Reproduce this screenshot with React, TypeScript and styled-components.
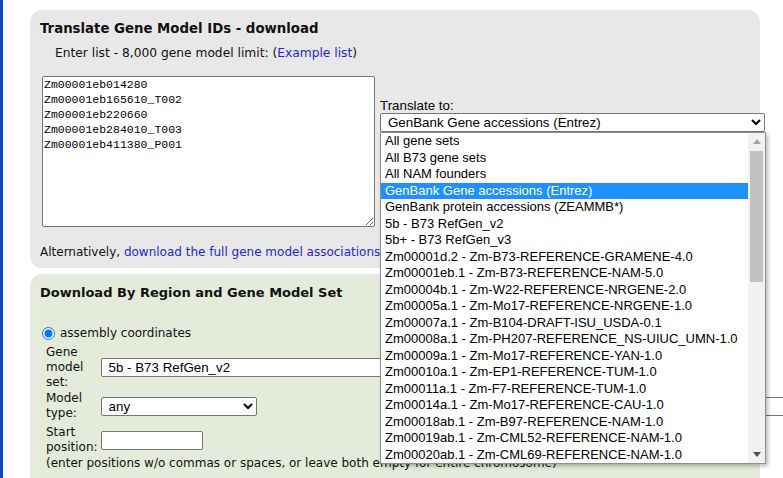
import React from "react";
import styled, { createGlobalStyle } from "styled-components";

const GlobalStyle = createGlobalStyle`
  html, body { margin: 0; padding: 0; overflow: hidden; background: #ffffff; }
  body {
    font-family: "DejaVu Sans", Verdana, sans-serif;
    font-size: 12px;
    color: #111111;
  }
  * { box-sizing: border-box; }
`;

const Page = styled.div`
  width: 783px;
  height: 478px;
  border-left: 3px solid #0b4ab5;
  padding: 10px 0 0 27px;
  overflow: hidden;
`;

const Panel = styled.section`
  width: 730px;
  background: #e8e8e8;
  border-radius: 12px;
  padding: 11px 10px 9px;
`;

const GreenPanel = styled.section`
  width: 730px;
  margin-top: 6px;
  background: #e5ebdb;
  border: 3px solid #e8e8e8;
  border-radius: 12px;
  padding: 8px 7px 0;
  min-height: 260px;
`;

const Title = styled.h2<{ $size?: number }>`
  margin: 0;
  font-size: ${(p) => p.$size ?? 13}px;
  font-weight: bold;
  line-height: 15px;
`;

const Intro = styled.p`
  margin: 10px 0 0;
  padding-left: 15px;
  font-size: 12.25px;
  line-height: 14px;
`;

const Link = styled.a`
  color: #2626d9;
  text-decoration: none;
`;

const EntryRow = styled.div`
  display: flex;
  align-items: flex-start;
  margin-top: 16px;
  padding-left: 2px;
`;

const IdBox = styled.textarea`
  flex: none;
  width: 333px;
  height: 151px;
  margin: 0;
  padding: 0 1px;
  font-family: "Liberation Mono", "DejaVu Sans Mono", monospace;
  font-size: 11.5px;
  line-height: 15px;
  color: #000;
  border: 1px solid #767676;
  border-radius: 2px;
  background: #fff;
  overflow: hidden;
`;

const TranslateCol = styled.div`
  flex: none;
  position: relative;
  margin: 22px 0 0 5px;
  width: 385px;
`;

const FieldLabel = styled.div`
  font-family: "Liberation Sans", Arial, sans-serif;
  font-size: 13.33px;
  line-height: 15.3px;
  color: #000;
`;

const NativeSelect = styled.select<{ $w: number }>`
  display: block;
  flex: none;
  width: ${(p) => p.$w}px;
  height: 19px;
  margin: 0;
  padding: 0 0 0 3px;
  font-family: "Liberation Sans", Arial, sans-serif;
  font-size: 13.33px;
  color: #000;
  background: #fff;
  border: 1px solid #767676;
  border-radius: 2px;
`;

const Popup = styled.div`
  position: absolute;
  top: 100%;
  left: 0;
  width: 386px;
  height: 332px;
  display: flex;
  background: #fff;
  border: 1px solid #8f8f8f;
  box-shadow: 2px 2px 4px rgba(0, 0, 0, 0.28);
  z-index: 10;
  font-family: "Liberation Sans", Arial, sans-serif;
  font-size: 13px;
  color: #000;
`;

const OptionList = styled.ul`
  flex: 1;
  margin: 0;
  padding: 0;
  list-style: none;
  overflow: hidden;
`;

const OptionItem = styled.li<{ $selected?: boolean }>`
  height: 16.5px;
  line-height: 16.5px;
  padding: 0 4px;
  white-space: nowrap;
  background: ${(p) => (p.$selected ? "#1e90ff" : "transparent")};
  color: ${(p) => (p.$selected ? "#ffffff" : "#000000")};
`;

const ScrollTrack = styled.div`
  width: 17px;
  display: flex;
  flex-direction: column;
  align-items: center;
  background: #f1f1f1;
`;

const ScrollArrow = styled.div`
  height: 17px;
  width: 100%;
  display: flex;
  align-items: center;
  justify-content: center;
`;

const ScrollThumb = styled.div`
  width: 13px;
  height: 131px;
  margin-top: 1px;
  background: #c1c1c1;
`;

const ScrollSpacer = styled.div`
  flex: 1;
`;

const AltLine = styled.p`
  margin: 18px 0 0;
  line-height: 14px;
  white-space: nowrap;
`;

const RadioRow = styled.label`
  display: flex;
  align-items: center;
  margin-top: 26px;
  line-height: 14px;
`;

const Radio = styled.input`
  width: 13px;
  height: 13px;
  margin: 0 5px 0 2px;
  accent-color: #0075ff;
`;

const FormGrid = styled.div`
  display: grid;
  grid-template-columns: min-content auto;
  column-gap: 3px;
  row-gap: 1px;
  margin-top: 5px;
  padding-left: 6px;
`;

const RowLabel = styled.div<{ $extra?: number }>`
  line-height: 15px;
  margin-top: ${(p) => p.$extra ?? 0}px;
`;

const RowControl = styled.div<{ $extra?: number }>`
  display: flex;
  align-items: center;
  margin-top: ${(p) => p.$extra ?? 0}px;
`;

const TextInput = styled.input<{ $w: number; $ml?: number }>`
  width: ${(p) => p.$w}px;
  height: 19px;
  margin: 0 0 0 ${(p) => p.$ml ?? 0}px;
  padding: 0 2px;
  font-family: "Liberation Sans", Arial, sans-serif;
  font-size: 13.33px;
  border: 1px solid #767676;
  border-radius: 2px;
  background: #fff;
  flex: none;
`;

const Note = styled.p`
  margin: 1px 0 0;
  padding-left: 6px;
  line-height: 15px;
  white-space: nowrap;
`;

const OPTIONS = [
  "All gene sets",
  "All B73 gene sets",
  "All NAM founders",
  "GenBank Gene accessions (Entrez)",
  "GenBank protein accessions (ZEAMMB*)",
  "5b - B73 RefGen_v2",
  "5b+ - B73 RefGen_v3",
  "Zm00001d.2 - Zm-B73-REFERENCE-GRAMENE-4.0",
  "Zm00001eb.1 - Zm-B73-REFERENCE-NAM-5.0",
  "Zm00004b.1 - Zm-W22-REFERENCE-NRGENE-2.0",
  "Zm00005a.1 - Zm-Mo17-REFERENCE-NRGENE-1.0",
  "Zm00007a.1 - Zm-B104-DRAFT-ISU_USDA-0.1",
  "Zm00008a.1 - Zm-PH207-REFERENCE_NS-UIUC_UMN-1.0",
  "Zm00009a.1 - Zm-Mo17-REFERENCE-YAN-1.0",
  "Zm00010a.1 - Zm-EP1-REFERENCE-TUM-1.0",
  "Zm00011a.1 - Zm-F7-REFERENCE-TUM-1.0",
  "Zm00014a.1 - Zm-Mo17-REFERENCE-CAU-1.0",
  "Zm00018ab.1 - Zm-B97-REFERENCE-NAM-1.0",
  "Zm00019ab.1 - Zm-CML52-REFERENCE-NAM-1.0",
  "Zm00020ab.1 - Zm-CML69-REFERENCE-NAM-1.0",
];

const SELECTED = "GenBank Gene accessions (Entrez)";

const IDS = [
  "Zm00001eb014280",
  "Zm00001eb165610_T002",
  "Zm00001eb220660",
  "Zm00001eb284010_T003",
  "Zm00001eb411380_P001",
].join("\n");

const Triangle = ({ up, color }: { up?: boolean; color: string }) => (
  <svg width="8" height="5" viewBox="0 0 8 5">
    <polygon points={up ? "0,5 8,5 4,0" : "0,0 8,0 4,5"} fill={color} />
  </svg>
);

export default function App() {
  return (
    <>
      <GlobalStyle />
      <Page>
        <Panel>
          <Title $size={13.3}>Translate Gene Model IDs - download</Title>
          <Intro>
            Enter list - 8,000 gene model limit: (<Link href="#">Example list</Link>)
          </Intro>
          <EntryRow>
            <IdBox defaultValue={IDS} spellCheck={false} />
            <TranslateCol>
              <FieldLabel>Translate to:</FieldLabel>
              <NativeSelect $w={385} defaultValue={SELECTED}>
                {OPTIONS.map((o) => (
                  <option key={o} value={o}>
                    {o}
                  </option>
                ))}
              </NativeSelect>
              <Popup>
                <OptionList>
                  {OPTIONS.map((o) => (
                    <OptionItem key={o} $selected={o === SELECTED}>
                      {o}
                    </OptionItem>
                  ))}
                </OptionList>
                <ScrollTrack>
                  <ScrollArrow>
                    <Triangle up color="#a3a3a3" />
                  </ScrollArrow>
                  <ScrollThumb />
                  <ScrollSpacer />
                  <ScrollArrow>
                    <Triangle color="#505050" />
                  </ScrollArrow>
                </ScrollTrack>
              </Popup>
            </TranslateCol>
          </EntryRow>
          <AltLine>
            Alternatively, <Link href="#">download the full gene model associations file</Link>.
          </AltLine>
        </Panel>

        <GreenPanel>
          <Title>Download By Region and Gene Model Set</Title>
          <RadioRow>
            <Radio type="radio" name="mode" defaultChecked />
            assembly coordinates
          </RadioRow>
          <FormGrid>
            <RowLabel>Gene model set:</RowLabel>
            <RowControl>
              <NativeSelect $w={420} defaultValue="5b - B73 RefGen_v2">
                {OPTIONS.slice(5).map((o) => (
                  <option key={o} value={o}>
                    {o}
                  </option>
                ))}
              </NativeSelect>
            </RowControl>
            <RowLabel>Model type:</RowLabel>
            <RowControl>
              <NativeSelect $w={156} defaultValue="any">
                <option value="any">any</option>
                <option value="gene">gene</option>
              </NativeSelect>
              <TextInput $w={300} $ml={300} type="text" />
            </RowControl>
            <RowLabel $extra={3}>Start position:</RowLabel>
            <RowControl $extra={3}>
              <TextInput $w={102} type="text" />
            </RowControl>
          </FormGrid>
          <Note>(enter positions w/o commas or spaces, or leave both empty for entire chromosome)</Note>
        </GreenPanel>
      </Page>
    </>
  );
}
